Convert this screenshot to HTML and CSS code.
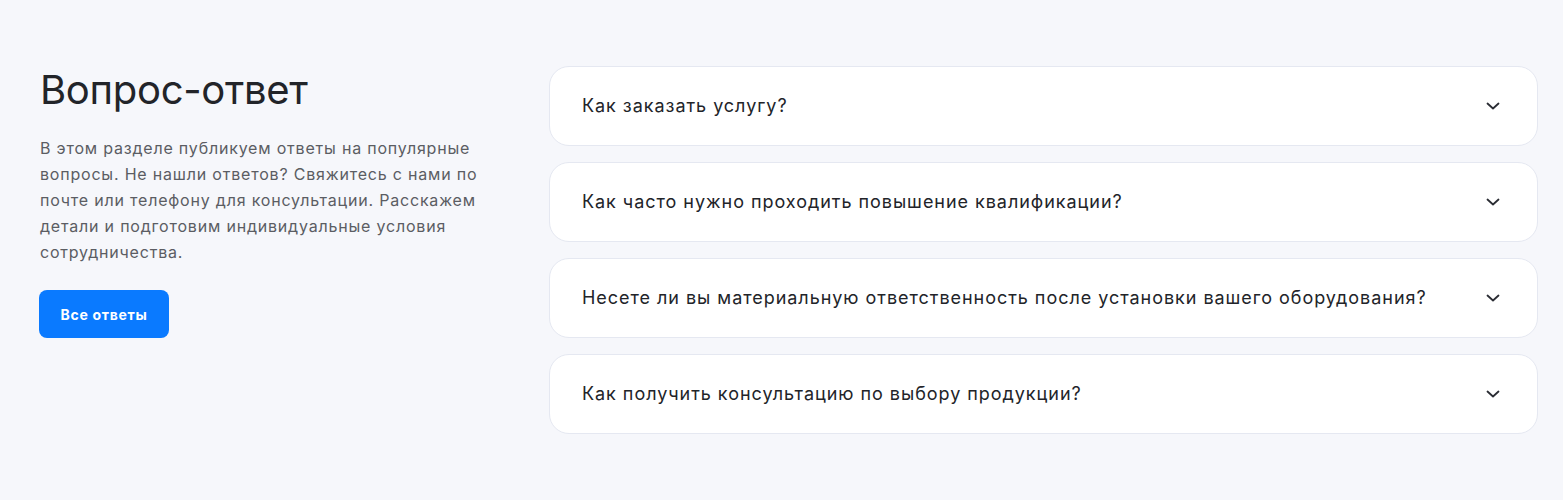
FILE: index.html
```html
<!DOCTYPE html>
<html lang="ru">
<head>
<meta charset="utf-8">
<link rel="stylesheet" href="styles.css">
</head>
<body>
<section class="faq">
  <div class="faq-intro">
    <h2 class="faq-title">Вопрос-ответ</h2>
    <p class="faq-text">В этом разделе публикуем ответы на популярные вопросы. Не нашли ответов? Свяжитесь с нами по почте или телефону для консультации. Расскажем детали и подготовим индивидуальные условия сотрудничества.</p>
    <a class="faq-btn" href="#">Все ответы</a>
  </div>
  <div class="faq-list">
    <div class="faq-item"><span class="faq-q">Как заказать услугу?</span><svg class="chev" viewBox="0 0 16 16" width="16" height="16"><path d="M2.5 5.5 8 10.5l5.5-5" fill="none" stroke="#2a2c33" stroke-width="1.8" stroke-linecap="round" stroke-linejoin="round"/></svg></div>
    <div class="faq-item"><span class="faq-q">Как часто нужно проходить повышение квалификации?</span><svg class="chev" viewBox="0 0 16 16" width="16" height="16"><path d="M2.5 5.5 8 10.5l5.5-5" fill="none" stroke="#2a2c33" stroke-width="1.8" stroke-linecap="round" stroke-linejoin="round"/></svg></div>
    <div class="faq-item"><span class="faq-q">Несете ли вы материальную ответственность после установки вашего оборудования?</span><svg class="chev" viewBox="0 0 16 16" width="16" height="16"><path d="M2.5 5.5 8 10.5l5.5-5" fill="none" stroke="#2a2c33" stroke-width="1.8" stroke-linecap="round" stroke-linejoin="round"/></svg></div>
    <div class="faq-item"><span class="faq-q">Как получить консультацию по выбору продукции?</span><svg class="chev" viewBox="0 0 16 16" width="16" height="16"><path d="M2.5 5.5 8 10.5l5.5-5" fill="none" stroke="#2a2c33" stroke-width="1.8" stroke-linecap="round" stroke-linejoin="round"/></svg></div>
  </div>
</section>
</body>
</html>
```
FILE: styles.css
```css
* { box-sizing: border-box; }
html, body { margin: 0; padding: 0; }
body {
  background: #f6f7fb;
  font-family: Inter, "Noto Sans", sans-serif;
  color: #222429;
  height: 500px;
}
.faq {
  display: flex;
  gap: 49px;
  padding: 66px 25px 0 40px;
}
.faq-intro {
  width: 460px;
  flex: none;
}
.faq-title {
  margin: 0;
  font-size: 40px;
  line-height: 48px;
  font-weight: 400;
  color: #222429;
  letter-spacing: -0.3px;
}
.faq-text {
  margin: 21px 0 0;
  font-size: 16px;
  line-height: 26px;
  color: #5b5d63;
  letter-spacing: 0.8px;
  max-width: 450px;
}
.faq-btn {
  display: inline-flex;
  align-items: center;
  justify-content: center;
  margin-top: 25px;
  margin-left: -1px;
  width: 130px;
  height: 48px;
  background: #0a7aff;
  color: #fff;
  font-size: 14px;
  font-weight: 700;
  letter-spacing: 0.7px;
  text-decoration: none;
  border-radius: 8px;
}
.faq-list {
  flex: 1;
  display: flex;
  flex-direction: column;
  gap: 16px;
}
.faq-item {
  display: flex;
  align-items: center;
  justify-content: space-between;
  height: 80px;
  padding: 0 36px 0 32px;
  background: #fff;
  border: 1px solid #e5e8f1;
  border-radius: 20px;
}
.faq-q {
  font-size: 18px;
  line-height: 24px;
  letter-spacing: 0.96px;
  color: #222429;
}
.chev { flex: none; }
```
